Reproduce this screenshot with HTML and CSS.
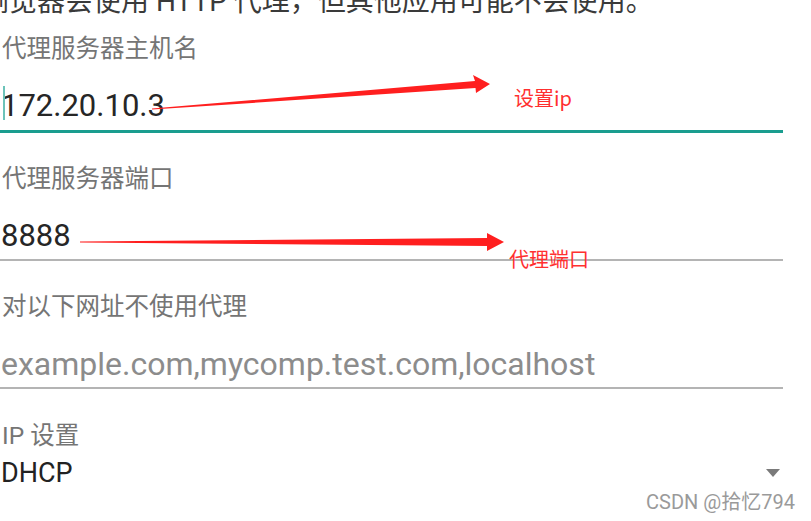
FILE: index.html
```html
<!DOCTYPE html>
<html lang="zh-CN">
<head>
    <meta charset="UTF-8">
    <meta name="viewport" content="width=device-width, initial-scale=1.0">
    <title>代理设置</title>
    <link rel="stylesheet" href="styles.css">
</head>
<body>
    <div class="screen">
        <p class="intro">浏览器会使用 HTTP 代理，但其他应用可能不会使用。</p>

        <div class="field focused">
            <div class="label">代理服务器主机名</div>
            <div class="value"><span class="caret"></span>172.20.10.3</div>
        </div>

        <div class="field">
            <div class="label">代理服务器端口</div>
            <div class="value">8888</div>
        </div>

        <div class="field">
            <div class="label">对以下网址不使用代理</div>
            <div class="value placeholder">example.com,mycomp.test.com,localhost</div>
        </div>

        <div class="select-group">
            <div class="label">IP 设置</div>
            <div class="select">
                <span>DHCP</span>
                <span class="arrow-down"></span>
            </div>
        </div>

        <div class="watermark">CSDN @拾忆794</div>

        <!-- red annotations drawn over the screenshot -->
        <svg class="marks" width="811" height="521" viewBox="0 0 811 521">
            <path d="M152 108.6 L475 81 L473 75 L490 84 L476 93 L475.5 88 L152 109.6 Z" fill="#ff1f1f"/>
            <path d="M80 241.6 L487 238 L487 233 L504 242 L487 251 L487 246 L80 242.6 Z" fill="#ff1f1f"/>
        </svg>
        <span class="note note-ip">设置ip</span>
        <span class="note note-port">代理端口</span>
    </div>
</body>
</html>
```

FILE: styles.css
```css
body {
    margin: 0;
    background-color: #fff;
    font-family: Roboto, "Noto Sans CJK SC", sans-serif;
    overflow: hidden;
}

.screen {
    position: relative;
    width: 783px;
    height: 521px;
    padding-right: 28px;
    overflow: hidden;
}

.intro {
    margin: -18px 0 0 -19px;
    font-size: 28px;
    line-height: 40px;
    color: #3a3a3a;
    white-space: nowrap;
}

.label {
    padding-left: 2px;
    font-size: 24.5px;
    line-height: 32px;
    color: #757575;
}

.field {
    margin-top: 30px;
    padding-bottom: 1px;
    border-bottom: 2px solid #b4b4b4;
}

.intro + .field {
    margin-top: 11px;
}

.field.focused {
    padding-bottom: 2px;
    border-bottom: 3px solid #1a9d8f;
}

.value {
    position: relative;
    margin-top: 19px;
    padding-left: 1px;
    font-size: 31px;
    line-height: 44px;
    color: #262626;
    white-space: nowrap;
}

.value.placeholder {
    font-size: 32px;
    color: #8c8c8c;
}

.caret {
    position: absolute;
    left: 3px;
    top: 2px;
    width: 2px;
    height: 34px;
    background-color: #6cc3b9;
}

.select-group {
    margin-top: 31px;
}

.select {
    display: flex;
    justify-content: space-between;
    align-items: center;
    margin-top: 3px;
    padding-left: 1px;
    font-size: 27px;
    line-height: 36px;
    color: #222;
}

.arrow-down {
    width: 0;
    height: 0;
    margin-right: 3px;
    border-left: 7px solid transparent;
    border-right: 7px solid transparent;
    border-top: 8px solid #7a7a7a;
}

.watermark {
    margin-top: 1px;
    margin-right: -12px;
    text-align: right;
    font-size: 20px;
    line-height: 20px;
    color: #9a9a9a;
}

.marks {
    position: absolute;
    left: 0;
    top: 0;
    pointer-events: none;
}

.note {
    position: absolute;
    font-family: "Noto Sans CJK SC", sans-serif;
    font-size: 20px;
    line-height: 24px;
    color: #ff3030;
    white-space: nowrap;
}

.note-ip {
    left: 514px;
    top: 86px;
}

.note-port {
    left: 509px;
    top: 247px;
}
```
